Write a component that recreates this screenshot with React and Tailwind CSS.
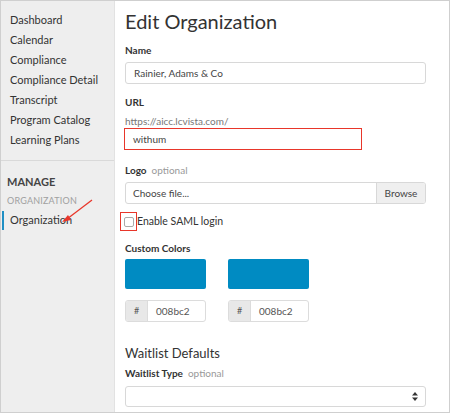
import React from 'react'

const navItems = ['Dashboard', 'Calendar', 'Compliance', 'Compliance Detail', 'Transcript', 'Program Catalog', 'Learning Plans']

const ColorField = () => (
  <div className="w-[81px]">
    <div className="h-[30px] bg-[#008bc2] rounded-[2px]" />
    <div className="mt-[11px] flex h-[22px] border border-[#dcdcdc] rounded-[3px] overflow-hidden">
      <div className="w-[22px] bg-[#e8e8e8] border-r border-[#dcdcdc] flex items-center justify-center text-[9px] text-[#555]">#</div>
      <div className="flex-1 flex items-center pl-[8px] text-[10px] text-[#555]">008bc2</div>
    </div>
  </div>
)

const App = () => {
  return (
    <div className="w-[450px] h-[413px] border border-[#cfcfcf] flex overflow-hidden bg-white font-['Lato','Open_Sans',sans-serif] text-[#333]">
      <aside className="relative w-[114px] shrink-0 bg-[#eeeeee] border-r border-[#e2e2e2] pt-[9px]">
        <ul>
          {navItems.map((item) => (
            <li key={item} className="pl-[9px] text-[11px] leading-[20px] text-[#333]">{item}</li>
          ))}
        </ul>
        <div className="mt-[10px] border-t border-[#d9d9d9] pt-[12px]">
          <div className="pl-[6px] text-[11px] font-bold leading-[18px] text-[#444]">MANAGE</div>
          <div className="pl-[6px] mt-[3px] text-[9px] leading-[14px] tracking-[0.2px] text-[#a0a0a0]">ORGANIZATION</div>
          <div className="flex items-center mt-[2px] h-[20px]">
            <div className="ml-[1px] w-[2px] h-[19px] bg-[#1f8fc4]" />
            <span className="pl-[6px] text-[11px] text-[#333]">Organization</span>
          </div>
        </div>
        <svg className="absolute left-[58px] top-[197px]" width="36" height="27" viewBox="0 0 36 27">
          <line x1="33" y1="2" x2="8" y2="21" stroke="#e8362a" strokeWidth="1.3" />
          <polygon points="3,24 9,17 12,22" fill="#e8362a" />
        </svg>
      </aside>

      <main className="flex-1 pl-[10px] pr-[23px] pt-[7px] text-[10px]">
        <h1 className="text-[20px] leading-[26px] text-[#333]">Edit Organization</h1>

        <div className="mt-[9px] font-bold leading-[14px]">Name</div>
        <div className="mt-[5px] h-[22px] border border-[#d8d8d8] rounded-[3px] flex items-center pl-[8px] text-[#444]">
          Rainier, Adams &amp; Co
        </div>

        <div className="mt-[11px] font-bold leading-[14px]">URL</div>
        <div className="mt-[5px] leading-[14px] text-[#777]">https://aicc.lcvista.com/</div>
        <div className="-ml-[1px] w-[238px] h-[22px] border-[1.5px] border-[#e8362a] flex items-center pl-[8px] text-[#444]">
          withum
        </div>

        <div className="mt-[13px] leading-[14px]">
          <span className="font-bold">Logo</span>
          <span className="ml-[5px] text-[#999]">optional</span>
        </div>
        <div className="mt-[5px] h-[22px] border border-[#d8d8d8] rounded-[3px] flex overflow-hidden">
          <div className="flex-1 flex items-center pl-[7px] text-[#444]">Choose file...</div>
          <div className="w-[49px] bg-[#efefef] border-l border-[#d8d8d8] flex items-center justify-center text-[#444]">Browse</div>
        </div>

        <div className="mt-[8px] flex items-center h-[19px]">
          <div className="-ml-[5px] w-[17px] h-[19px] border-[1.5px] border-[#e8362a] flex items-center justify-center">
            <div className="w-[10px] h-[10px] border border-[#aaa] rounded-[2px] bg-white" />
          </div>
          <span className="text-[10.5px] text-[#333]">Enable SAML login</span>
        </div>

        <div className="mt-[10px] font-bold leading-[14px]">Custom Colors</div>
        <div className="mt-[4px] flex gap-[22px]">
          <ColorField />
          <ColorField />
        </div>

        <h2 className="mt-[22px] text-[13px] leading-[18px] text-[#333]">Waitlist Defaults</h2>
        <div className="mt-[4px] leading-[14px]">
          <span className="font-bold">Waitlist Type</span>
          <span className="ml-[5px] text-[#999]">optional</span>
        </div>
        <div className="mt-[6px] h-[21px] border border-[#d8d8d8] rounded-[3px] flex items-center justify-end pr-[7px]">
          <svg width="6" height="9" viewBox="0 0 6 9">
            <polygon points="3,0 6,3.5 0,3.5" fill="#333" />
            <polygon points="3,9 6,5.5 0,5.5" fill="#333" />
          </svg>
        </div>
      </main>
    </div>
  )
}

export default App
